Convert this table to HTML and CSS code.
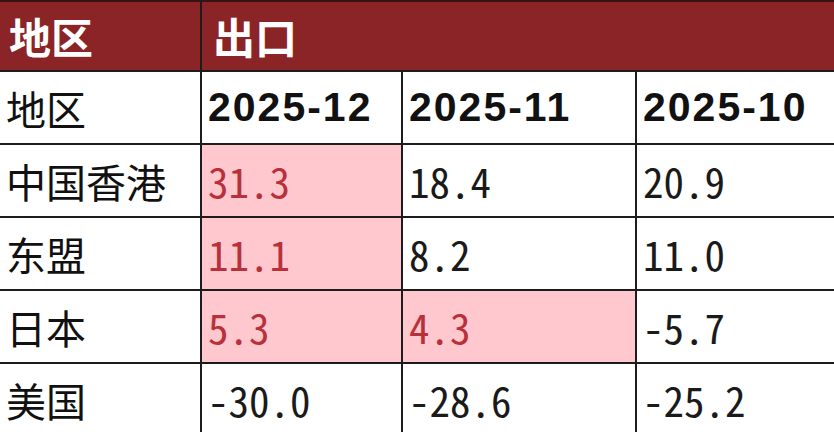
FILE: index.html
```html
<!DOCTYPE html>
<html lang="zh">
<head>
<meta charset="utf-8">
<link rel="stylesheet" href="styles.css">
</head>
<body>
<table class="sheet">
  <colgroup>
    <col class="c1"><col class="c2"><col class="c3"><col class="c4">
  </colgroup>
  <tr class="head">
    <th class="h-region">地区</th>
    <th class="h-export" colspan="3">出口</th>
  </tr>
  <tr class="sub">
    <td class="cjk">地区</td>
    <td class="date">2025-12</td>
    <td class="date">2025-11</td>
    <td class="date">2025-10</td>
  </tr>
  <tr>
    <td class="cjk">中国香港</td>
    <td class="num hi">31.3</td>
    <td class="num">18.4</td>
    <td class="num">20.9</td>
  </tr>
  <tr>
    <td class="cjk">东盟</td>
    <td class="num hi">11.1</td>
    <td class="num">8.2</td>
    <td class="num">11.0</td>
  </tr>
  <tr>
    <td class="cjk">日本</td>
    <td class="num hi">5.3</td>
    <td class="num hi">4.3</td>
    <td class="num">-5.7</td>
  </tr>
  <tr>
    <td class="cjk">美国</td>
    <td class="num">-30.0</td>
    <td class="num">-28.6</td>
    <td class="num">-25.2</td>
  </tr>
</table>
</body>
</html>
```

FILE: styles.css
```css
html, body {
  margin: 0;
  padding: 0;
  background: #ffffff;
  overflow: hidden;
}

.sheet {
  border-collapse: collapse;
  table-layout: fixed;
  width: 834px;
  font-family: "Noto Sans CJK SC", "Noto Sans", sans-serif;
  color: #111111;
}

.c1 { width: 201px; }
.c2 { width: 201px; }
.c3 { width: 234px; }
.c4 { width: 198px; }

.sheet th,
.sheet td {
  border: 2px solid #1c1c1c;
  padding: 0 0 0 6px;
  text-align: left;
  vertical-align: middle;
  white-space: nowrap;
  overflow: hidden;
}

.sheet tr > :first-child {
  border-left: none;
}

.sheet tr > :last-child {
  border-right: none;
}

.head th {
  height: 68px;
  background: #8b2426;
  color: #ffffff;
  font-size: 42px;
  font-weight: 700;
  line-height: 1;
  border-top: 2px solid #3a1212;
  padding-left: 9px;
}

.head .h-export {
  padding-left: 11px;
}

.sheet tr:not(.head) td {
  height: 71px;
}

.cjk {
  font-size: 40px;
  line-height: 1;
  padding-left: 7px;
}

.date {
  font-family: "Liberation Sans", Arial, sans-serif;
  font-weight: 700;
  font-size: 41px;
  letter-spacing: 2px;
  line-height: 1;
  padding-left: 9px;
}

.num {
  font-size: 41px;
  line-height: 1;
  font-feature-settings: "hwid" 1;
  padding-left: 4px;
  color: #1a1a1a;
}

.hi {
  background: #ffc7ce;
  color: #b8303a;
}
```
